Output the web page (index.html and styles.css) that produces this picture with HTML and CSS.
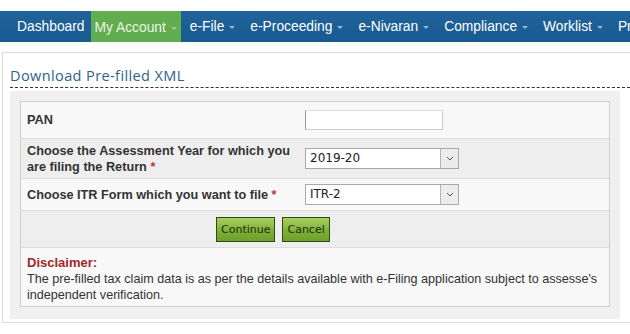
FILE: index.html
```html
<!DOCTYPE html>
<html>
<head>
<meta charset="utf-8">
<link rel="stylesheet" href="styles.css">
</head>
<body>
<nav class="nav">
  <a class="nav-item">Dashboard</a>
  <a class="nav-item active">My Account <span class="caret"></span></a>
  <a class="nav-item">e-File <span class="caret"></span></a>
  <a class="nav-item">e-Proceeding <span class="caret"></span></a>
  <a class="nav-item">e-Nivaran <span class="caret"></span></a>
  <a class="nav-item">Compliance <span class="caret"></span></a>
  <a class="nav-item">Worklist <span class="caret"></span></a>
  <a class="nav-item">Profile Settings</a>
</nav>
<div class="page">
  <h1 class="title">Download Pre-filled XML</h1>
  <div class="panel">
    <div class="table">
      <div class="row light">
        <div class="label">PAN</div>
        <div class="field"><div class="input"></div></div>
      </div>
      <div class="row dark tall">
        <div class="label">Choose the Assessment Year for which you are filing the Return <span class="req">*</span></div>
        <div class="field"><div class="select"><span class="sel-text">2019-20</span><span class="sel-btn"><svg width="8" height="5" viewBox="0 0 8 5"><path d="M1 1 L4 4 L7 1" fill="none" stroke="#555" stroke-width="1"/></svg></span></div></div>
      </div>
      <div class="row light short">
        <div class="label">Choose ITR Form which you want to file <span class="req">*</span></div>
        <div class="field"><div class="select"><span class="sel-text">ITR-2</span><span class="sel-btn"><svg width="8" height="5" viewBox="0 0 8 5"><path d="M1 1 L4 4 L7 1" fill="none" stroke="#555" stroke-width="1"/></svg></span></div></div>
      </div>
      <div class="row dark buttons">
        <button class="btn">Continue</button>
        <button class="btn">Cancel</button>
      </div>
      <div class="disclaimer">
        <div class="disc-title">Disclaimer:</div>
        <div class="disc-text">The pre-filled tax claim data is as per the details available with e-Filing application subject to assesse's independent verification.</div>
      </div>
    </div>
  </div>
</div>
</body>
</html>
```
FILE: styles.css
```css
* { box-sizing: border-box; }
html, body { margin: 0; padding: 0; background: #fff; overflow: hidden; }
body { width: 630px; height: 334px; font-family: "Liberation Sans", Arial, sans-serif; }

.nav {
  margin-top: 11px;
  height: 31px;
  background: linear-gradient(#20639a, #195a8f);
  display: flex;
  align-items: stretch;
  padding-left: 12px;
  white-space: nowrap;
  overflow: hidden;
}
.nav-item {
  color: #fff;
  font-size: 13.8px;
  padding: 0 5px;
  display: flex;
  align-items: center;
  margin-right: 1px;
}
.nav-item.active {
  background: #62ad4f;
  color: #e9f6e2;
  height: 32px;
  padding: 0 4px 0 4px;
  margin-right: 4px;
}
.caret {
  display: inline-block;
  width: 0; height: 0;
  border-left: 3px solid transparent;
  border-right: 3px solid transparent;
  border-top: 3px solid rgba(255,255,255,0.55);
  margin-left: 5px;
  margin-right: 4px;
  margin-top: 2px;
}
.active .caret { border-top-color: rgba(255,255,255,0.4); margin-right: 0; }

.page {
  margin: 10px 0 0 2px;
  border: 1px solid #dcdcdc;
  border-right: none;
  height: 271px;
  padding: 13px 0 0 7px;
}
.title {
  margin: 0;
  font-family: "Open Sans", "DejaVu Sans", sans-serif;
  font-weight: normal;
  font-size: 14.5px;
  color: #2f6289;
  line-height: 20px;
  padding-bottom: 1px;
  border-bottom: 1px dashed #333;
  letter-spacing: 0.4px;
}
.panel {
  margin-top: 3px;
  width: 610px;
  background: #f0f0f0;
  padding: 10px 10px 12px 10px;
}
.table {
  border: 1px solid #cfcfcf;
  background: #f8f8f8;
}
.row {
  display: flex;
  align-items: center;
  border-bottom: 1px solid #dedede;
  height: 37px;
}
.row.tall { height: 40px; }
.row.short { height: 32px; }
.light { background: #f8f8f8; }
.dark { background: #eeeeee; }
.label {
  width: 284px;
  padding-left: 6px;
  font-weight: bold;
  font-size: 12.7px;
  color: #333;
  line-height: 16px;
}
.req { color: #c0392b; }
.field { display: flex; align-items: center; }
.input {
  width: 138px; height: 20px;
  background: #fff;
  border: 1px solid #ccc;
  border-left-color: #999;
  border-top-color: #ddd;
}
.select {
  width: 154px; height: 21px;
  background: #fff;
  border: 1px solid #a9a9a9;
  display: flex;
  align-items: stretch;
}
.sel-text {
  flex: 1;
  font-family: "DejaVu Sans", Verdana, sans-serif;
  font-size: 12px;
  color: #222;
  line-height: 19px;
  padding-left: 4px;
}
.sel-btn {
  width: 18px;
  background: #ececec;
  border-left: 1px solid #b5b5b5;
  display: flex;
  align-items: center;
  justify-content: center;
}
.buttons { padding-left: 195px; gap: 7px; }
.btn {
  height: 25px;
  padding: 0 4px;
  font-family: "DejaVu Sans", Verdana, sans-serif;
  font-size: 11px;
  color: #1f2d0d;
  background: linear-gradient(#a9d160, #7cae35 60%, #6f9f2c);
  border: 1px solid #2f4a12;
  border-radius: 0;
  cursor: pointer;
}
.disclaimer {
  padding: 7px 6px 6px 6px;
  height: 58px;
}
.disc-title {
  font-weight: bold;
  font-size: 13px;
  color: #a3282a;
  line-height: 16px;
}
.disc-text {
  font-size: 12.6px;
  color: #333;
  line-height: 16px;
}
```
